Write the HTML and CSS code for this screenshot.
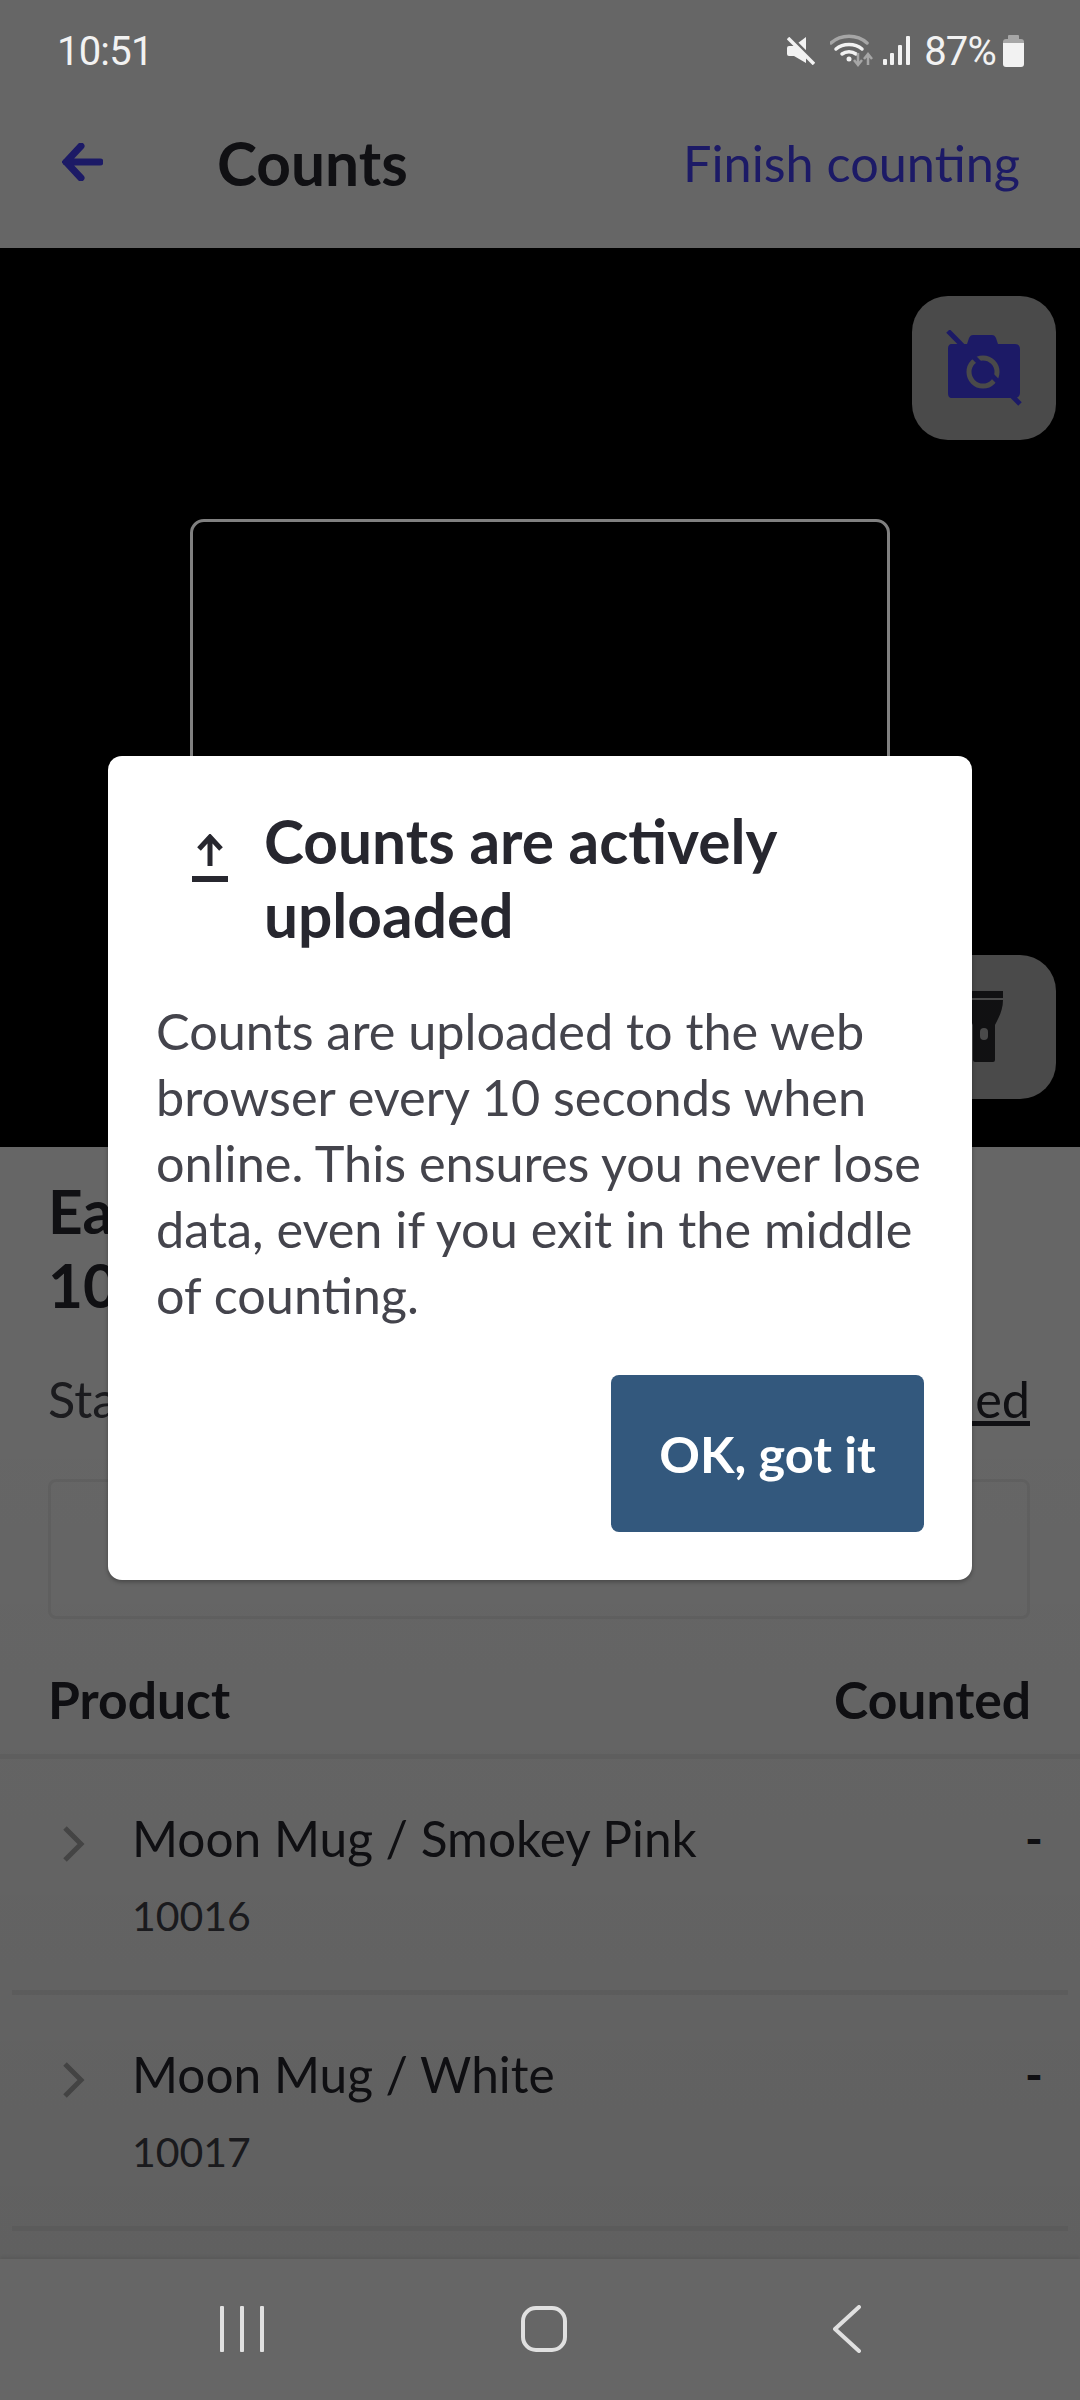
FILE: index.html
```html
<!DOCTYPE html>
<html lang="en">
<head>
  <meta charset="UTF-8">
  <meta name="viewport" content="width=device-width, initial-scale=1.0">
  <title>Counts</title>
  <link rel="stylesheet" href="styles.css">
</head>
<body>
  <div class="phone">
    <div class="status-bar">
      <span class="clock">10:51</span>
      <div class="status-icons">
        <svg class="ic-mute" viewBox="0 0 28 28"><path d="M1 9h6L19 0v26L7 19H2a2 2 0 0 1-2-2v-6a2 2 0 0 1 2-2z" fill="#f2f2f2"/><path d="M3 0l26 26" stroke="#666" stroke-width="4"/><path d="M1 1l26 26" stroke="#f2f2f2" stroke-width="3.500"/></svg>
        <svg class="ic-wifi" viewBox="0 0 44 33"><g fill="none" stroke-linecap="round"><path d="M1 9c10-9 26-9 36 0" stroke="#a6a6a6" stroke-width="3.500"/><path d="M6 15c7-6 19-6 26 0" stroke="#f2f2f2" stroke-width="3.500"/><path d="M12 20c4-3 10-3 14 0" stroke="#f2f2f2" stroke-width="3.500"/></g><circle cx="19" cy="25" r="2.500" fill="#f2f2f2"/><path d="M28 19v11M24 26l4 5 4-5" fill="none" stroke="#a6a6a6" stroke-width="2.500"/><path d="M38 31V21M34 25l4-5 4 5" fill="none" stroke="#a6a6a6" stroke-width="2.500"/></svg>
        <svg class="ic-signal" viewBox="0 0 27 29"><g fill="#f2f2f2"><rect x="0" y="23" width="4" height="6" rx="1"/><rect x="7" y="17" width="4" height="12" rx="1"/><rect x="15" y="9" width="4" height="20" rx="1"/><rect x="23" y="0" width="4" height="29" rx="1"/></g></svg>
        <span class="battery-pct">87%</span>
        <svg class="ic-battery" viewBox="0 0 21 32"><path d="M6 0h9a1 1 0 0 1 1 1v3H5V1a1 1 0 0 1 1-1z" fill="#a6a6a6"/><path d="M3 4h15a3 3 0 0 1 3 3v3H0V7a3 3 0 0 1 3-3z" fill="#a6a6a6"/><path d="M0 8h21v21a3 3 0 0 1-3 3H3a3 3 0 0 1-3-3z" fill="#f2f2f2"/></svg>
      </div>
    </div>

    <div class="screen">
      <header class="top-bar">
        <svg class="back-arrow" viewBox="0 0 41 38"><path d="M19 3L4 19l15 16M4 19h34" fill="none" stroke="#4641ff" stroke-width="7" stroke-linecap="round"/></svg>
        <h1 class="top-title">Counts</h1>
        <a class="finish-link">Finish counting</a>
      </header>

      <section class="camera">
        <div class="scan-frame"></div>
        <button class="cam-btn cam-btn-top">
          <svg viewBox="0 0 76 76" width="76" height="76"><path d="M6 14h15l2-6c1-2 2-3 4-3h19c2 0 3 1 4 3l2 6h17c3 0 5 2 5 5v44c0 3-2 5-5 5H6c-3 0-4-2-4-5V19c0-3 1-5 4-5z" fill="#4641ff"/><circle cx="37" cy="42" r="14" fill="none" stroke="#b9b9b9" stroke-width="5"/><path d="M2 1l72 73" stroke="#4641ff" stroke-width="5"/></svg>
        </button>
        <button class="cam-btn cam-btn-bottom">
          <svg viewBox="0 0 76 76" width="76" height="76"><path d="M19 2h38v7H19zM19 11h38c0 10-4 17-8 25v35a2 2 0 0 1-2 2H29a2 2 0 0 1-2-2V36c-4-8-8-15-8-25z" fill="#2a2a2e"/><rect x="34" y="39" width="8" height="12" rx="4" fill="#b9b9b9"/></svg>
        </button>
      </section>

      <section class="details">
        <h2 class="details-title">Eastside store<br>10 Main Street</h2>
        <div class="details-meta">
          <span>Started today</span>
          <a class="meta-link">Show scanned</a>
        </div>
        <div class="search-box"></div>
      </section>

      <div class="list-head">
        <span>Product</span>
        <span>Counted</span>
      </div>
      <ul class="product-list">
        <li class="product-row">
          <svg class="chevron" viewBox="0 0 24 36"><path d="M3 2l16 16L3 34" fill="none" stroke="#b0b0b0" stroke-width="5"/></svg>
          <div class="product-info">
            <div class="product-name">Moon Mug / Smokey Pink</div>
            <div class="product-sku">10016</div>
          </div>
          <span class="product-count">-</span>
        </li>
        <li class="product-row">
          <svg class="chevron" viewBox="0 0 24 36"><path d="M3 2l16 16L3 34" fill="none" stroke="#b0b0b0" stroke-width="5"/></svg>
          <div class="product-info">
            <div class="product-name">Moon Mug / White</div>
            <div class="product-sku">10017</div>
          </div>
          <span class="product-count">-</span>
        </li>
      </ul>

      <div class="overlay">
        <div class="modal">
          <div class="modal-head">
            <svg class="upload-icon" viewBox="0 0 36 48"><path d="M18 32V4M7 15L18 3l11 12" fill="none" stroke="#27272f" stroke-width="5"/><rect x="0" y="42" width="36" height="6" fill="#27272f"/></svg>
            <h3 class="modal-title">Counts are actively uploaded</h3>
          </div>
          <p class="modal-text">Counts are uploaded to the web browser every 10 seconds when online. This ensures you never lose data, even if you exit in the middle of counting.</p>
          <div class="modal-actions">
            <button class="ok-btn">OK, got it</button>
          </div>
        </div>
      </div>
    </div>

    <nav class="nav-bar">
      <svg class="nav-recent" viewBox="0 0 44 46"><path d="M2 1.500v43M22 1.500v43M42 1.500v43" stroke="#e0e0e0" stroke-width="4" stroke-linecap="round"/></svg>
      <svg class="nav-home" viewBox="0 0 46 46"><rect x="2" y="2" width="42" height="42" rx="13" fill="none" stroke="#e0e0e0" stroke-width="4"/></svg>
      <svg class="nav-back" viewBox="0 0 28 48"><path d="M26 2L2 24l24 22" fill="none" stroke="#e0e0e0" stroke-width="4" stroke-linecap="round" stroke-linejoin="round"/></svg>
    </nav>
  </div>
</body>
</html>
```

FILE: styles.css
```css
* {
  margin: 0;
  padding: 0;
  box-sizing: border-box;
  list-style: none;
}

body {
  font-family: "Lato", "Liberation Sans", sans-serif;
  background: #666;
}

.phone {
  width: 1080px;
  height: 2400px;
  display: flex;
  flex-direction: column;
  overflow: hidden;
}

/* status bar */
.status-bar {
  height: 76px;
  flex: none;
  padding: 28px 56px 0 57px;
  display: flex;
  justify-content: space-between;
  background: #666;
  color: #f2f2f2;
  font-family: "Roboto", sans-serif;
  font-size: 40px;
  letter-spacing: -.8px;
  line-height: 48px;
}

.status-icons {
  display: flex;
  align-items: flex-start;
}

.ic-mute {
  width: 28px;
  height: 28px;
  margin: 9px 15px 0 0;
}

.ic-wifi {
  width: 44px;
  height: 33px;
  margin: 6px 9px 0 0;
}

.ic-signal {
  width: 27px;
  height: 29px;
  margin: 8px 14px 0 0;
}

.battery-pct {
  margin-right: 7px;
}

.ic-battery {
  width: 21px;
  height: 32px;
  margin-top: 7px;
}

/* app screen */
.screen {
  position: relative;
  flex: 1;
  overflow: hidden;
  background: #fff;
}

.top-bar {
  height: 172px;
  padding: 0 60px 0 62px;
  display: flex;
  align-items: center;
}

.back-arrow {
  width: 41px;
  height: 38px;
  margin-right: 114px;
}

.top-title {
  font-size: 60.4px;
  font-weight: 700;
  color: #27272f;
}

.finish-link {
  margin-left: auto;
  font-size: 50.4px;
  color: #4641ff;
}

.camera {
  position: relative;
  height: 899px;
  background: #000;
}

.scan-frame {
  position: absolute;
  left: 190px;
  top: 271px;
  width: 700px;
  height: 356px;
  border: 3px solid #808080;
  border-radius: 14px;
  z-index: 1;
}

.cam-btn {
  position: absolute;
  right: 24px;
  width: 144px;
  height: 144px;
  display: flex;
  align-items: center;
  justify-content: center;
  border: 0;
  border-radius: 36px;
  background: #b9b9b9;
}

.cam-btn-top {
  top: 48px;
}

.cam-btn-bottom {
  bottom: 48px;
}

.details {
  padding: 27px 50px 0 48px;
}

.details-title {
  font-size: 60.4px;
  line-height: 74px;
  font-weight: 700;
  color: #27272f;
}

.details-meta {
  margin-top: 47px;
  display: flex;
  justify-content: space-between;
  font-size: 50.4px;
  line-height: 60px;
  color: #44444c;
}

.meta-link {
  text-decoration: underline;
  color: #27272f;
}

.search-box {
  margin-top: 50px;
  height: 140px;
  border: 3px solid #f0f0f0;
  border-radius: 8px;
}

.list-head {
  height: 140px;
  padding: 50px 49px 0 48px;
  display: flex;
  justify-content: space-between;
  font-size: 51.6px;
  line-height: 60px;
  font-weight: 700;
  color: #27272f;
  border-bottom: 5px solid #f0f0f0;
}

.product-row {
  height: 236px;
  margin: 0 12px;
  padding: 0 25px 0 50px;
  display: flex;
  align-items: flex-start;
  border-bottom: 5px solid #f0f0f0;
}

.chevron {
  width: 24px;
  height: 36px;
  flex: none;
  margin-top: 67px;
}

.product-info {
  margin-left: 46px;
  flex: 1;
}

.product-name {
  margin-top: 49px;
  font-size: 49.6px;
  line-height: 60px;
  color: #27272f;
}

.product-sku {
  margin-top: 23px;
  font-size: 41px;
  line-height: 50px;
  color: #44444c;
}

.product-count {
  margin-top: 49px;
  font-size: 48px;
  line-height: 60px;
  font-weight: 700;
  color: #27272f;
}

/* dialog */
.overlay {
  position: absolute;
  inset: 0;
  display: flex;
  align-items: center;
  justify-content: center;
  background: linear-gradient(rgba(0, 0, 0, .6) 60%, rgba(0, 0, 0, .625));
}

.modal {
  position: relative;
  z-index: 2;
  width: 864px;
  padding: 48px 48px 48px;
  border-radius: 14px;
  background: #fff;
  box-shadow: 0 2px 4px rgba(0, 0, 0, .3);
}

.modal-head {
  display: flex;
  align-items: flex-start;
}

.upload-icon {
  width: 36px;
  height: 48px;
  flex: none;
  margin: 30px 36px 0 36px;
}

.modal-title {
  font-size: 60.4px;
  line-height: 74px;
  font-weight: 700;
  color: #27272f;
}

.modal-text {
  margin-top: 46px;
  font-size: 50.4px;
  line-height: 66px;
  color: #44444c;
}

.modal-actions {
  margin-top: 47px;
  display: flex;
  justify-content: flex-end;
}

.ok-btn {
  width: 313px;
  height: 157px;
  border: 0;
  border-radius: 8px;
  background: #33587d;
  color: #fff;
  font-family: inherit;
  font-size: 50.4px;
  font-weight: 700;
}

/* android nav */
.nav-bar {
  height: 141px;
  flex: none;
  position: relative;
  display: flex;
  background: #666;
  box-shadow: 0 -2px 3px rgba(0, 0, 0, .08);
}

.nav-recent {
  width: 44px;
  height: 46px;
  margin: 47px 0 0 220px;
}

.nav-home {
  width: 46px;
  height: 46px;
  margin: 47px 0 0 257px;
}

.nav-back {
  width: 28px;
  height: 48px;
  margin: 46px 0 0 266px;
}
```
